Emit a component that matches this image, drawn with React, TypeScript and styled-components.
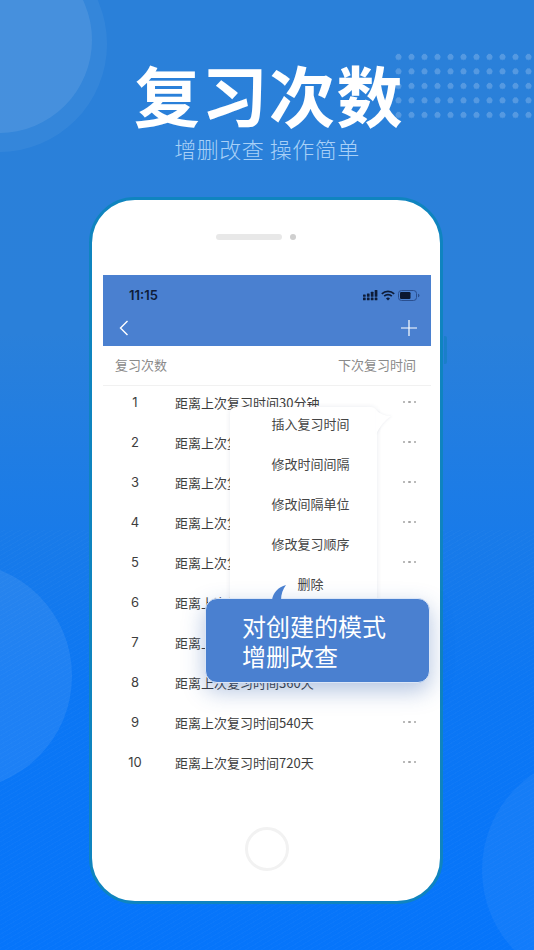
import React from 'react';
import styled, { createGlobalStyle } from 'styled-components';

const CJK = `"Noto Sans CJK SC", "Noto Sans", sans-serif`;

const GlobalStyle = createGlobalStyle`
    html, body {
        margin: 0;
        padding: 0;
        background: #0a76f8;
    }
    body {
        font-family: ${CJK};
    }
`;

const Page = styled.div`
    position: relative;
    width: 534px;
    height: 950px;
    overflow: hidden;
    display: flex;
    flex-direction: column;
    align-items: center;
    background: linear-gradient(180deg, #2a80d9 0%, #2a80da 35%, #0c77f4 72%, #0675fb 100%);
`;

// Faint diagonal stripes in the lower half
const Stripes = styled.div`
    position: absolute;
    left: 0;
    right: 0;
    bottom: 0;
    height: 420px;
    background: repeating-linear-gradient(
        -30deg,
        rgba(255, 255, 255, 0.02) 0 1px,
        transparent 1px 4px
    );
`;

const Circle = styled.div<{ $x: number; $y: number; $r: number; $alpha: number }>`
    position: absolute;
    left: ${({ $x, $r }) => $x - $r}px;
    top: ${({ $y, $r }) => $y - $r}px;
    width: ${({ $r }) => $r * 2}px;
    height: ${({ $r }) => $r * 2}px;
    border-radius: 50%;
    background: rgba(255, 255, 255, ${({ $alpha }) => $alpha});
`;

const Dots = styled.div`
    position: absolute;
    left: 392px;
    top: 50px;
    width: 142px;
    height: 73px;
    background-image: radial-gradient(circle at 6.5px 7px, rgba(255, 255, 255, 0.2) 2.8px, transparent 3.3px);
    background-size: 13px 14.5px;
`;

const Title = styled.h1`
    position: relative;
    margin: 53px 0 0 4px;
    font-family: ${CJK};
    font-size: 66px;
    font-weight: 700;
    line-height: 80px;
    letter-spacing: 1.5px;
    color: #fff;
`;

const Subtitle = styled.div`
    position: relative;
    margin-top: -1px;
    font-size: 22px;
    font-weight: 300;
    line-height: 32px;
    letter-spacing: 0.5px;
    color: #a8d0f7;
    white-space: pre;
`;

const Phone = styled.div`
    position: relative;
    box-sizing: border-box;
    width: 354px;
    height: 707px;
    margin-top: 33px;
    margin-left: -2px;
    padding: 75px 10px 0 11px;
    background: #fff;
    border: 3.5px solid #0f84bf;
    border-radius: 46px;
`;

const SideButton = styled.div`
    position: absolute;
    right: -7px;
    top: 136px;
    width: 3px;
    height: 28px;
    border-radius: 0 2px 2px 0;
    background: #1a7fc9;
`;

const Speaker = styled.div`
    position: absolute;
    left: 124px;
    top: 34px;
    width: 66px;
    height: 6px;
    border-radius: 3px;
    background: #e8e8e8;
`;

const Camera = styled.div`
    position: absolute;
    left: 198px;
    top: 34px;
    width: 6px;
    height: 6px;
    border-radius: 50%;
    background: #cfcfcf;
`;

const HomeButton = styled.div`
    position: absolute;
    left: 153px;
    bottom: 30px;
    box-sizing: border-box;
    width: 44px;
    height: 44px;
    border-radius: 50%;
    border: 3.5px solid #f2f2f2;
`;

const Screen = styled.div`
    position: relative;
    width: 328px;
`;

const Header = styled.div`
    height: 71px;
    display: flex;
    flex-direction: column;
    background: #4a80d0;
`;

const StatusBar = styled.div`
    display: flex;
    align-items: center;
    justify-content: space-between;
    height: 40px;
    padding: 0 11px 0 26px;
`;

const Time = styled.span`
    font-family: "Inter", "Liberation Sans", sans-serif;
    font-size: 13px;
    font-weight: 600;
    color: #0e1c38;
`;

const StatusIcons = styled.div`
    display: flex;
    align-items: center;
    gap: 3px;
`;

const NavBar = styled.div`
    display: flex;
    align-items: center;
    justify-content: space-between;
    height: 26px;
    padding: 0 14px 0 16px;
`;

const ColumnHead = styled.div`
    display: flex;
    align-items: center;
    justify-content: space-between;
    height: 36px;
    padding: 0 15px 3px 12px;
    border-bottom: 1px solid #f1f1f1;
    font-size: 13px;
    color: #8a8a8a;
`;

const RowList = styled.div`
    margin-top: -4px;
`;

const Row = styled.div`
    display: flex;
    align-items: center;
    height: 40px;
    padding: 0 15px 0 0;
    font-size: 13px;
    color: #3d3d3d;
`;

const RowIndex = styled.span`
    flex: none;
    width: 64px;
    text-align: center;
    font-family: "Inter", "Liberation Sans", sans-serif;
    font-size: 13px;
`;

const RowText = styled.span`
    flex: 1;
    margin-left: 8px;
    white-space: nowrap;
`;

const More = styled.span`
    display: flex;
    gap: 3px;
`;

const MoreDot = styled.i`
    width: 2.5px;
    height: 2.5px;
    border-radius: 50%;
    background: #a5a5a5;
`;

const Menu = styled.div`
    position: absolute;
    left: 127px;
    top: 132px;
    width: 147px;
    height: 230px;
    border-radius: 6px;
    background: #fff;
    box-shadow: 0 0 5px rgba(40, 60, 100, 0.1);
`;

const MenuTail = styled.svg`
    position: absolute;
    right: -15px;
    top: 2px;
    filter: drop-shadow(1px 0 1px rgba(40, 60, 100, 0.07));
`;

const MenuItem = styled.div`
    height: 40px;
    display: flex;
    align-items: center;
    justify-content: center;
    padding-left: 14px;
    font-size: 13px;
    color: #444;

    &:first-of-type {
        margin-top: -4px;
    }
`;

const Callout = styled.div`
    position: absolute;
    left: 102px;
    top: 323px;
    box-sizing: border-box;
    width: 225px;
    height: 85px;
    padding: 12px 0 0 36px;
    border: 1px solid #dbe6f7;
    border-radius: 12px;
    background: #4a80d0;
    box-shadow: 0 8px 22px rgba(40, 90, 170, 0.35);
    font-size: 24px;
    line-height: 30px;
    color: #fff;
`;

const CalloutTail = styled.svg`
    position: absolute;
    left: 65px;
    top: -14px;
`;

const rows = [
    '距离上次复习时间30分钟',
    '距离上次复习时间12小时',
    '距离上次复习时间1天',
    '距离上次复习时间2天',
    '距离上次复习时间4天',
    '距离上次复习时间7天',
    '距离上次复习时间180天',
    '距离上次复习时间360天',
    '距离上次复习时间540天',
    '距离上次复习时间720天',
];

const menuItems = ['插入复习时间', '修改时间间隔', '修改间隔单位', '修改复习顺序', '删除'];

const SignalIcon = () => (
    <svg width="15" height="11" viewBox="0 0 15 11" fill="#0e1c38">
        <rect x="0" y="4.5" width="2.7" height="2.2" rx="0.5" />
        <rect x="0" y="7.6" width="2.7" height="2.6" rx="0.5" />
        <rect x="3.9" y="3.5" width="2.7" height="3.2" rx="0.5" />
        <rect x="3.9" y="7.6" width="2.7" height="2.6" rx="0.5" />
        <rect x="7.8" y="1.8" width="2.7" height="4.9" rx="0.5" />
        <rect x="7.8" y="7.6" width="2.7" height="2.6" rx="0.5" />
        <rect x="11.7" y="0" width="2.7" height="6.7" rx="0.5" />
        <rect x="11.7" y="7.6" width="2.7" height="2.6" rx="0.5" />
    </svg>
);

const WifiIcon = () => (
    <svg width="14" height="11" viewBox="0 0 14 11" fill="none" stroke="#0e1c38" strokeWidth="1.7">
        <path d="M.8 3.8a8.9 8.9 0 0 1 12.4 0" />
        <path d="M3.2 6.2a5.4 5.4 0 0 1 7.6 0" />
        <path d="M7 10.6 5 8.4a2.8 2.8 0 0 1 4 0z" fill="#0e1c38" stroke="none" />
    </svg>
);

const BatteryIcon = () => (
    <svg width="22" height="11" viewBox="0 0 22 11">
        <rect x="0.5" y="0.5" width="18" height="10" rx="3" fill="none" stroke="#2a4f8f" />
        <rect x="2" y="2" width="10.5" height="7" rx="1.2" fill="#0b1730" />
        <path d="M20 3.8c1 .3 1.5.9 1.5 1.7s-.5 1.4-1.5 1.7z" fill="#2a4f8f" />
    </svg>
);

export default function App() {
    return (
        <Page>
            <GlobalStyle />
            <Stripes />
            <Circle $x={-1} $y={44} $r={108} $alpha={0.05} />
            <Circle $x={-1} $y={40} $r={93} $alpha={0.09} />
            <Circle $x={-42} $y={676} $r={114} $alpha={0.08} />
            <Circle $x={598} $y={870} $r={116} $alpha={0.05} />
            <Dots />

            <Title>复习次数</Title>
            <Subtitle>增删改查 操作简单</Subtitle>

            <Phone>
                <SideButton />
                <Speaker />
                <Camera />
                <Screen>
                    <Header>
                        <StatusBar>
                            <Time>11:15</Time>
                            <StatusIcons>
                                <SignalIcon />
                                <WifiIcon />
                                <BatteryIcon />
                            </StatusIcons>
                        </StatusBar>
                        <NavBar>
                            <svg width="10" height="16" viewBox="0 0 10 16" fill="none" stroke="#fff" strokeWidth="1.4">
                                <path d="M8.5 1 1.5 8l7 7" />
                            </svg>
                            <svg width="16" height="16" viewBox="0 0 16 16" fill="none" stroke="#fff" strokeWidth="1.2">
                                <path d="M8 0v16M0 8h16" />
                            </svg>
                        </NavBar>
                    </Header>
                    <ColumnHead>
                        <span>复习次数</span>
                        <span>下次复习时间</span>
                    </ColumnHead>
                    <RowList>
                        {rows.map((text, i) => (
                            <Row key={text}>
                                <RowIndex>{i + 1}</RowIndex>
                                <RowText>{text}</RowText>
                                <More>
                                    <MoreDot />
                                    <MoreDot />
                                    <MoreDot />
                                </More>
                            </Row>
                        ))}
                    </RowList>
                    <Menu>
                        <MenuTail width="16" height="26" viewBox="0 0 16 26">
                            <path d="M0 1C4 5 9 7 15 7 9 11 4 17 0 25z" fill="#fff" />
                        </MenuTail>
                        {menuItems.map((item) => (
                            <MenuItem key={item}>{item}</MenuItem>
                        ))}
                    </Menu>
                    <Callout>
                        <CalloutTail width="16" height="15" viewBox="0 0 16 15">
                            <path d="M1 15C2 8 7 2 15 0c-3 4-5 9-5 15z" fill="#4a80d0" />
                        </CalloutTail>
                        对创建的模式
                        <br />
                        增删改查
                    </Callout>
                </Screen>
                <HomeButton />
            </Phone>
        </Page>
    );
}
